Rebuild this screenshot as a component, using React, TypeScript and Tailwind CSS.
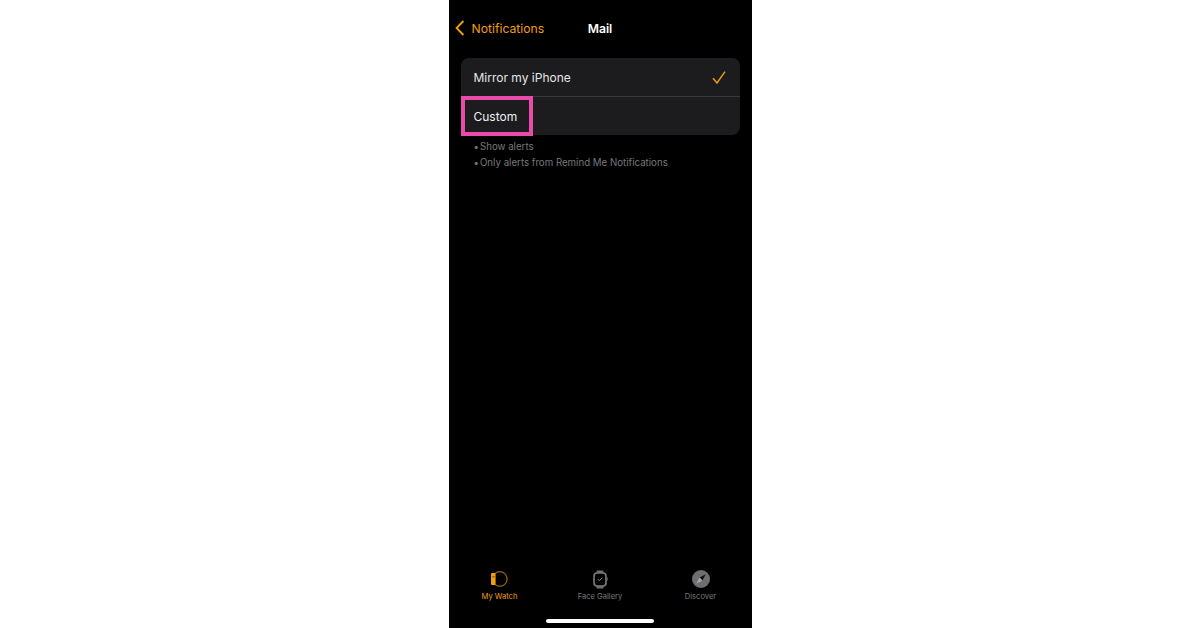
const font = { fontFamily: "Inter, sans-serif" };

const BackIcon = () => (
  <svg width="10" height="16" viewBox="0 0 10 16" fill="none">
    <path d="M8.4 1 L1.6 8 L8.4 15" stroke="#f19e0e" strokeWidth="1.9" />
  </svg>
);

const CheckIcon = () => (
  <svg width="14" height="13" viewBox="0 0 14 13" fill="none">
    <path d="M1 7.2 L5 12 L13 0.6" stroke="#f19e0e" strokeWidth="1.4" />
  </svg>
);

const WatchIcon = () => (
  <svg width="17" height="18" viewBox="0 0 17 18" fill="none">
    <circle cx="8.8" cy="9" r="7.3" stroke="#9a6410" strokeWidth="1.2" />
    <rect x="0" y="3" width="4.6" height="12" rx="1" fill="#f19e0e" />
    <rect x="1.4" y="6.2" width="2.2" height="1.2" fill="#7a4e08" />
  </svg>
);

const GalleryIcon = () => (
  <svg width="16" height="19" viewBox="0 0 16 19" fill="none">
    <path d="M4 4 L4.8 0.5 H11.2 L12 4 Z M4 15 L4.8 18.5 H11.2 L12 15 Z" fill="#6f6f72" />
    <rect x="2" y="3" width="12" height="13" rx="3.2" fill="#000" stroke="#77777a" strokeWidth="1.7" />
    <rect x="14.6" y="7.5" width="1" height="3" fill="#77777a" />
    <path d="M5.8 9.2 L7.4 10.6 L10.4 7.8" stroke="#8a8a8d" strokeWidth="1" />
  </svg>
);

const CompassIcon = () => (
  <svg width="18" height="18" viewBox="0 0 18 18">
    <circle cx="9" cy="9" r="9" fill="#6f6f72" />
    <path d="M13.8 4.2 L10.4 10.4 L7.6 7.6 Z" fill="#111" />
    <path d="M4.2 13.8 L7.6 7.6 L10.4 10.4 Z" fill="#a8a8aa" />
  </svg>
);

const App = () => {
  return (
    <div className="w-[1200px] h-[628px] bg-white flex justify-center overflow-hidden" style={font}>
      <div className="w-[303px] h-[628px] bg-black flex flex-col">
        {/* Header */}
        <div className="relative h-[58px] pt-[19px] shrink-0">
          <div className="flex items-center h-[18px] pl-[6px] text-[#f19e0e]">
            <BackIcon />
            <span className="text-[12.2px] leading-[19px] ml-[7px]">Notifications</span>
          </div>
          <div className="absolute top-[19px] left-0 right-0 text-center text-white text-[12.2px] leading-[19px] font-semibold">
            Mail
          </div>
        </div>

        {/* Options */}
        <div className="relative mx-3 h-[77px] rounded-[8px] bg-[#1c1c1e] shrink-0">
          <div className="h-[39px] pt-[1px] flex items-center justify-between pl-[13px] pr-[14px] border-b border-[#38383a]">
            <span className="text-[12px] text-[#e6e6e6]">Mirror my iPhone</span>
            <CheckIcon />
          </div>
          <div className="h-[38px] pt-[1px] flex items-center pl-[13px]">
            <span className="text-[12px] text-[#f0f0f0]">Custom</span>
          </div>
          <div className="absolute left-0 top-[38px] w-[72px] h-[40px] border-[4px] border-[#ea4aaa]" />
        </div>

        {/* Notes */}
        <div className="pl-[25px] pt-[4px] text-[9.7px] leading-[16px] text-[#77777a]">
          <div>
            <span className="mr-[1px]">•</span>Show alerts
          </div>
          <div>
            <span className="mr-[1px]">•</span>Only alerts from Remind Me Notifications
          </div>
        </div>

        {/* Tab bar */}
        <div className="mt-auto flex flex-col shrink-0">
          <div className="flex justify-between px-[21px] h-[37px]">
            <div className="flex flex-col items-center w-[60px] text-[#f19e0e]">
              <WatchIcon />
              <span className="text-[7.6px] leading-[10px] mt-[4px] whitespace-nowrap">My Watch</span>
            </div>
            <div className="flex flex-col items-center w-[60px] text-[#77777a]">
              <GalleryIcon />
              <span className="text-[7.6px] leading-[10px] mt-[3px] whitespace-nowrap">Face Gallery</span>
            </div>
            <div className="flex flex-col items-center w-[60px] text-[#77777a]">
              <CompassIcon />
              <span className="text-[7.6px] leading-[10px] mt-[4px] whitespace-nowrap">Discover</span>
            </div>
          </div>
          <div className="h-[4px] w-[108px] mx-auto mt-[12px] mb-[5px] rounded-full bg-white" />
        </div>
      </div>
    </div>
  );
};

export default App;
